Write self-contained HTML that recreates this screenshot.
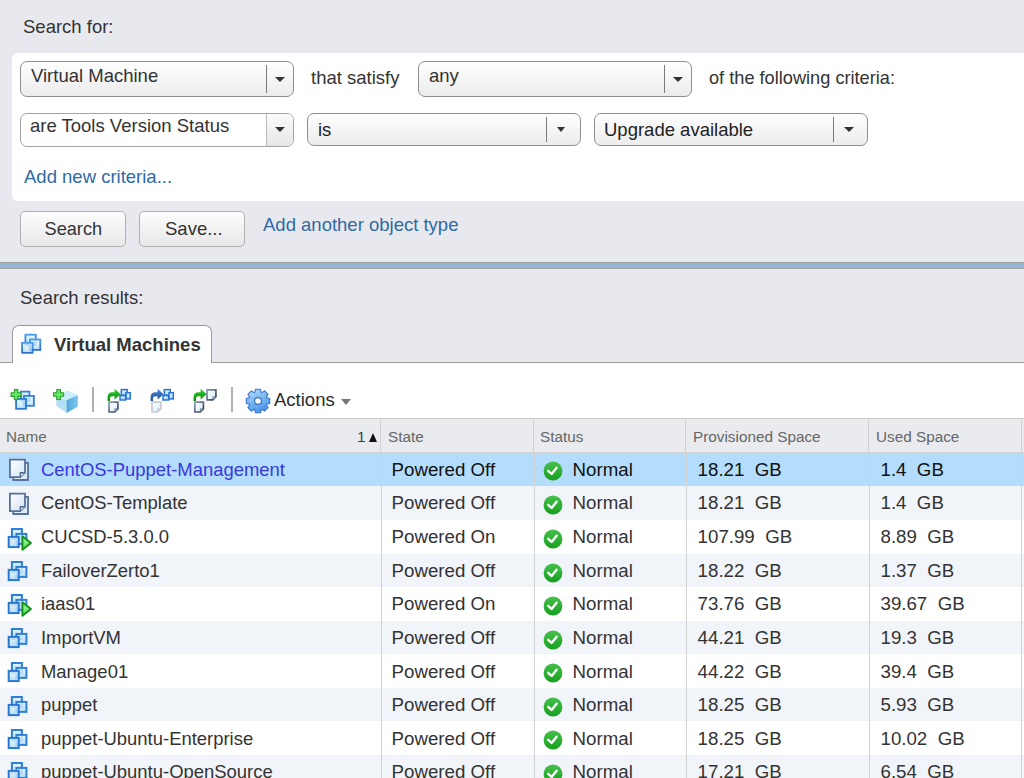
<!DOCTYPE html>
<html><head><meta charset="utf-8">
<style>
*{box-sizing:border-box;margin:0;padding:0}
html,body{width:1024px;height:778px;overflow:hidden}
body{background:#e8e9ee;font-family:"Liberation Sans",sans-serif;color:#333;font-size:18.5px;position:relative}
.a{position:absolute;white-space:pre}
.t{position:absolute;white-space:pre;line-height:20px}
.panel{position:absolute;left:12px;top:53px;width:1020px;height:148px;background:#fff;border-radius:6px}
.dd{position:absolute;border:1.5px solid #8e8e8e;border-radius:7px;background:linear-gradient(#fefefe,#ececec)}
.dd .div{position:absolute;top:3px;bottom:3px;width:1px;background:#7a7a7a}
.dd .arr{position:absolute;width:0;height:0;border-left:5px solid transparent;border-right:5px solid transparent;border-top:5px solid #333}
.btn{position:absolute;border:1px solid #b0b0b0;border-radius:5px;background:linear-gradient(#fdfdfd,#e8e8e8)}
.link{color:#2e6aa6}
.sep{position:absolute;left:0;top:262px;width:1024px;height:7px;background:#96b5d2;border-top:1.5px solid #a0a0a0;border-bottom:1.5px solid #a6a6a6}
.tab{position:absolute;left:12px;top:325px;width:200px;height:38px;background:#fff;border:1.5px solid #9a9a9a;border-bottom:none;border-radius:7px 7px 0 0}
.lower{position:absolute;left:0;top:362px;width:1024px;height:416px;background:#fff;border-top:1.5px solid #9a9a9a}
.hdr{position:absolute;left:0;top:418px;width:1024px;height:35px;background:#e9ebef;border-top:1.5px solid #cacaca;border-bottom:1px solid #d6d3d0;z-index:2}
.hdr2{z-index:3}
.hdr span{position:absolute;top:9px;font-size:15px;color:#666;line-height:18px}
.row{position:absolute;left:0;width:1024px;height:34px}
.row span{position:absolute;top:7px;line-height:20px}
.vl{position:absolute;width:1px;background:#d2d2d2}
.ic{position:absolute;overflow:visible}
.r{font-size:18.7px}
.h{position:absolute;top:427.5px;font-size:15.3px;color:#666;line-height:18px;white-space:pre}
.tsep{position:absolute;top:387px;width:1.5px;height:25px;background:#b0b0b0}
</style></head><body>
<div class="t" style="left:23px;top:17px">Search for:</div>
<div class="panel"></div>

<!-- row 1 -->
<div class="dd" style="left:20px;top:61px;width:274px;height:36px">
  <div class="div" style="left:245px"></div><div class="arr" style="left:254px;top:15px"></div>
</div>
<div class="t" style="left:31px;top:66px">Virtual Machine</div>
<div class="t" style="left:311px;top:68px">that satisfy</div>
<div class="dd" style="left:418px;top:61px;width:274px;height:36px">
  <div class="div" style="left:245px"></div><div class="arr" style="left:254px;top:15px"></div>
</div>
<div class="t" style="left:429px;top:66px">any</div>
<div class="t" style="left:709px;top:68px;font-size:18.2px">of the following criteria:</div>

<!-- row 2 -->
<div class="dd" style="left:20px;top:113px;width:274px;height:34px;background:#fff;border-color:#a4a4a4;overflow:hidden">
  <div style="position:absolute;left:245px;top:0;bottom:0;right:0;background:linear-gradient(#fbfbfb,#e6e6e6);border-left:1px solid #b9b9b9"></div><div class="arr" style="left:254px;top:13px"></div>
</div>
<div class="t" style="left:30px;top:116px">are Tools Version Status</div>
<div class="dd" style="left:307px;top:113px;width:274px;height:33px">
  <div class="div" style="left:238px"></div><div class="arr" style="left:249px;top:13px;border-left-width:4px;border-right-width:4px"></div>
</div>
<div class="t" style="left:318px;top:120px;color:#222">is</div>
<div class="dd" style="left:594px;top:113px;width:274px;height:33px">
  <div class="div" style="left:238px"></div><div class="arr" style="left:249px;top:13px;border-left-width:5px;border-right-width:5px"></div>
</div>
<div class="t" style="left:604px;top:120px;color:#222">Upgrade available</div>

<div class="t link" style="left:24px;top:167px">Add new criteria...</div>

<div class="btn" style="left:20px;top:211px;width:106px;height:36px"></div>
<div class="t" style="left:44.5px;top:219px;color:#333;font-size:18.2px">Search</div>
<div class="btn" style="left:139px;top:211px;width:106px;height:36px"></div>
<div class="t" style="left:165px;top:219px;color:#333">Save...</div>
<div class="t link" style="left:263px;top:215px">Add another object type</div>

<div class="sep"></div>

<div class="t" style="left:20px;top:288px">Search results:</div>
<div class="lower"></div>
<div class="tab"></div>
<svg class="ic" style="left:21px;top:333px" width="22" height="22" viewBox="0 0 22 22">
<defs><linearGradient id="tabg" x1="0" y1="0" x2="0" y2="1"><stop offset="0" stop-color="#e8f8ff"/><stop offset="1" stop-color="#b2dcf6"/></linearGradient>
<linearGradient id="tabs" x1="0" y1="0" x2="0" y2="1"><stop offset="0" stop-color="#4c9ae6"/><stop offset="1" stop-color="#2a72cc"/></linearGradient></defs>
<rect x="4.4" y="1.7" width="10.4" height="10" fill="url(#tabg)" stroke="url(#tabs)" stroke-width="1.8"/>
<rect x="8.9" y="6.5" width="10.4" height="10.4" fill="url(#tabg)" fill-opacity="0.8" stroke="url(#tabs)" stroke-width="1.8"/>
<rect x="1.1" y="9.8" width="10.5" height="10" fill="url(#tabg)" fill-opacity="0.75" stroke="url(#tabs)" stroke-width="1.8"/>
</svg>
<div class="t" style="left:54px;top:335px;font-weight:bold">Virtual Machines</div>


<!-- toolbar -->
<svg class="ic" style="left:10px;top:389px" width="28" height="24" viewBox="0 0 28 24">
<defs><linearGradient id="tvg" x1="0" y1="0" x2="0" y2="1"><stop offset="0" stop-color="#e6f7fe"/><stop offset="1" stop-color="#aedbf6"/></linearGradient></defs>
<rect x="10.8" y="2.6" width="8.6" height="9" fill="url(#tvg)" stroke="#3481da" stroke-width="1.8"/>
<rect x="14" y="6.9" width="9.9" height="9.9" fill="url(#tvg)" fill-opacity="0.8" stroke="#3481da" stroke-width="1.8"/>
<rect x="6.1" y="9.9" width="9.9" height="9.9" fill="url(#tvg)" fill-opacity="0.75" stroke="#2b78d2" stroke-width="1.8"/>
<path d="M4.3 0.5999999999999996 H7.8999999999999995 V3.8 H11.1 V7.3999999999999995 H7.8999999999999995 V10.6 H4.3 V7.3999999999999995 H1.0999999999999996 V3.8 H4.3 Z" fill="#62ea62" stroke="#2f9a2f" stroke-width="1.1" stroke-linejoin="round"/>
</svg>
<svg class="ic" style="left:52px;top:389px" width="28" height="26" viewBox="0 0 28 26">
<defs><linearGradient id="cbl" x1="0" y1="0" x2="0" y2="1"><stop offset="0" stop-color="#a9dbf3"/><stop offset="1" stop-color="#bfe6f8"/></linearGradient>
<linearGradient id="cbr" x1="0" y1="0" x2="1" y2="0"><stop offset="0" stop-color="#4fa6dc"/><stop offset="1" stop-color="#7ccaf0"/></linearGradient></defs>
<path d="M4.3 8.2 L14.9 1.6 L25.9 6 L14.5 11.2 Z" fill="#c8ecf9"/>
<path d="M4.3 8.2 L14.5 11.2 L14.5 23.9 L4.3 17 Z" fill="url(#cbl)"/>
<path d="M14.5 11.2 L25.9 6 L25.7 17.8 L14.5 23.9 Z" fill="url(#cbr)"/>
<path d="M4.8 0.5 H8.4 V3.7 H11.6 V7.3 H8.4 V10.5 H4.8 V7.3 H1.5999999999999996 V3.7 H4.8 Z" fill="#62ea62" stroke="#2f9a2f" stroke-width="1.1" stroke-linejoin="round"/>
</svg>
<div class="tsep" style="left:92px"></div>
<svg class="ic" style="left:100px;top:384px" width="34" height="32" viewBox="0 0 34 32"><defs>
<linearGradient id="garr" x1="0" y1="0" x2="0" y2="1"><stop offset="0" stop-color="#2ed02e"/><stop offset="1" stop-color="#0b8a0b"/></linearGradient>
<linearGradient id="barr" x1="0" y1="0" x2="0" y2="1"><stop offset="0" stop-color="#4a86d8"/><stop offset="1" stop-color="#1c4a94"/></linearGradient>
<linearGradient id="pgs" x1="0" y1="0" x2="1" y2="1"><stop offset="0" stop-color="#8d9bb2"/><stop offset="1" stop-color="#2c3b56"/></linearGradient>
<linearGradient id="pgf" x1="0" y1="0" x2="1" y2="1"><stop offset="0" stop-color="#ffffff"/><stop offset="1" stop-color="#d8ecfa"/></linearGradient>
<linearGradient id="sqf" x1="0" y1="0" x2="0" y2="1"><stop offset="0" stop-color="#e2f6fe"/><stop offset="1" stop-color="#9fdaf6"/></linearGradient>
</defs><path d="M7.6 17 L7.6 13 Q7.6 8.3 12.6 8.3 L14.6 8.3 L14.6 4.8 L20.6 10.2 L14.6 15.6 L14.6 12.3 L12.8 12.3 Q10 12.3 10 14.6 L10 17 Z" fill="url(#garr)"/><rect x="21.3" y="5.6" width="6" height="5.6" fill="url(#sqf)" stroke="#2b74d4" stroke-width="1.5"/>
<rect x="26" y="8.7" width="4.3" height="6.2" fill="url(#sqf)" stroke="#2b74d4" stroke-width="1.5"/>
<rect x="20" y="11.6" width="5.6" height="4.4" fill="url(#sqf)" stroke="#2b74d4" stroke-width="1.5"/><path d="M9 18.1 H17.9 V24.8 L14.7 28 H9 Z" fill="url(#pgf)" stroke="url(#pgs)" stroke-width="1.7" stroke-linejoin="miter"/><path d="M15.0 27.6 V25.0 H17.599999999999998" fill="#dfeaf5" stroke="url(#pgs)" stroke-width="1.3"/></svg>
<svg class="ic" style="left:143px;top:384px" width="34" height="32" viewBox="0 0 34 32"><path d="M7.6 17 L7.6 13 Q7.6 8.3 12.6 8.3 L14.6 8.3 L14.6 4.8 L20.6 10.2 L14.6 15.6 L14.6 12.3 L12.8 12.3 Q10 12.3 10 14.6 L10 17 Z" fill="url(#barr)"/><rect x="21.3" y="5.6" width="6" height="5.6" fill="url(#sqf)" stroke="#2b74d4" stroke-width="1.5"/>
<rect x="26" y="8.7" width="4.3" height="6.2" fill="url(#sqf)" stroke="#2b74d4" stroke-width="1.5"/>
<rect x="20" y="11.6" width="5.6" height="4.4" fill="url(#sqf)" stroke="#2b74d4" stroke-width="1.5"/><path d="M9 18.1 H17.9 V24.8 L14.7 28 H9 Z" fill="url(#pgf)" stroke="#c5ccd6" stroke-width="1.7" stroke-linejoin="miter"/><path d="M15.0 27.6 V25.0 H17.599999999999998" fill="#dfeaf5" stroke="#c5ccd6" stroke-width="1.3"/></svg>
<svg class="ic" style="left:186px;top:384px" width="34" height="32" viewBox="0 0 34 32"><path d="M7.6 17 L7.6 13 Q7.6 8.3 12.6 8.3 L14.6 8.3 L14.6 4.8 L20.6 10.2 L14.6 15.6 L14.6 12.3 L12.8 12.3 Q10 12.3 10 14.6 L10 17 Z" fill="url(#garr)"/><path d="M21 5.9 H29.9 V12.7 L26.7 15.9 H21 Z" fill="url(#pgf)" stroke="url(#pgs)" stroke-width="1.7" stroke-linejoin="miter"/><path d="M27.0 15.5 V12.899999999999999 H29.599999999999998" fill="#dfeaf5" stroke="url(#pgs)" stroke-width="1.3"/><path d="M8.8 18.1 H17.4 V24.8 L14.2 28 H8.8 Z" fill="url(#pgf)" stroke="url(#pgs)" stroke-width="1.7" stroke-linejoin="miter"/><path d="M14.5 27.6 V25.0 H17.099999999999998" fill="#dfeaf5" stroke="url(#pgs)" stroke-width="1.3"/></svg>
<div class="tsep" style="left:231px"></div>
<svg class="ic" style="left:245px;top:388px" width="26" height="26" viewBox="0 0 26 26">
<defs><linearGradient id="gear" x1="0" y1="0" x2="0.4" y2="1"><stop offset="0" stop-color="#b6dcfa"/><stop offset="1" stop-color="#4d98e8"/></linearGradient></defs>
<path fill="url(#gear)" stroke="#3173c8" stroke-width="1.1" stroke-linejoin="round" d="M9.90 4.23 L10.50 1.26 L15.50 1.26 L16.10 4.23 L17.01 4.61 L19.53 2.93 L23.07 6.47 L21.39 8.99 L21.77 9.90 L24.74 10.50 L24.74 15.50 L21.77 16.10 L21.39 17.01 L23.07 19.53 L19.53 23.07 L17.01 21.39 L16.10 21.77 L15.50 24.74 L10.50 24.74 L9.90 21.77 L8.99 21.39 L6.47 23.07 L2.93 19.53 L4.61 17.01 L4.23 16.10 L1.26 15.50 L1.26 10.50 L4.23 9.90 L4.61 8.99 L2.93 6.47 L6.47 2.93 L8.99 4.61 Z"/>
<circle cx="13" cy="13" r="3.4" fill="#fff" stroke="#2f6fc6" stroke-width="1.2"/>
</svg>
<div class="t" style="left:274px;top:389.7px;color:#2a2a2a">Actions</div>
<div class="a" style="left:340.5px;top:398.5px;width:0;height:0;border-left:5px solid transparent;border-right:5px solid transparent;border-top:6px solid #777"></div>

<div class="hdr"></div>
<div class="vl hdr2" style="left:380px;top:419px;height:33px;background:#d0d0d0"></div>
<div class="vl hdr2" style="left:533px;top:419px;height:33px;background:#d0d0d0"></div>
<div class="vl hdr2" style="left:685px;top:419px;height:33px;background:#d0d0d0"></div>
<div class="vl hdr2" style="left:868px;top:419px;height:33px;background:#d0d0d0"></div>
<div class="vl hdr2" style="left:1021px;top:419px;height:33px;background:#d0d0d0"></div>
<div class="h hdr2" style="left:6px">Name</div>
<div class="h hdr2" style="left:357px;color:#1d4a5a">1</div>
<div class="a hdr2" style="left:369px;top:433px;width:0;height:0;border-left:4.5px solid transparent;border-right:4.5px solid transparent;border-bottom:9px solid #111"></div>
<div class="h hdr2" style="left:388px">State</div>
<div class="h hdr2" style="left:540px">Status</div>
<div class="h hdr2" style="left:693px">Provisioned Space</div>
<div class="h hdr2" style="left:876px">Used Space</div>
<div class="row" style="top:452px;height:34.0px;background:#b4ddfb"></div>
<svg class="ic" style="left:8px;top:458px" width="24" height="24" viewBox="0 0 24 24">
<defs><linearGradient id="tg0" x1="0" y1="0" x2="1" y2="1"><stop offset="0" stop-color="#ffffff"/><stop offset="1" stop-color="#d3e4f6"/></linearGradient></defs>
<path d="M5.3 4.9 H20 V22 H5.3 Z" fill="url(#tg0)" stroke="#56729a" stroke-width="1.8"/>
<path d="M1.9 1.7 H17 V14.7 L12.2 19.1 H1.9 Z" fill="url(#tg0)" stroke="#56729a" stroke-width="1.8" stroke-linejoin="miter"/>
<path d="M12.4 18.9 V14.9 H16.8" fill="#eef4fb" stroke="#56729a" stroke-width="1.6"/>
</svg>
<div class="t r" style="left:41px;top:460.1px;color:#3838e0;font-size:18.45px">CentOS-Puppet-Management</div>
<div class="t r" style="left:391.6px;top:460.1px;color:#111">Powered Off</div>
<svg class="ic" style="left:542.5px;top:461px" width="20" height="20" viewBox="0 0 20 20">
<defs><linearGradient id="cg0" x1="0" y1="0" x2="0" y2="1"><stop offset="0" stop-color="#46c04c"/><stop offset="1" stop-color="#16a01e"/></linearGradient></defs>
<circle cx="10" cy="10" r="9.4" fill="url(#cg0)"/>
<path d="M5.2 9.8 L8.6 12.9 L13.6 6.8" fill="none" stroke="#fff" stroke-width="2.4" stroke-linecap="round" stroke-linejoin="round"/>
</svg>
<div class="t r" style="left:572.6px;top:460.1px;color:#111">Normal</div>
<div class="t r" style="left:697.6px;top:460.1px;color:#111">18.21  GB</div>
<div class="t r" style="left:880.5px;top:460.1px;color:#111">1.4  GB</div>
<div class="row" style="top:486px;height:34.0px;background:#f1f4f9"></div>
<svg class="ic" style="left:8px;top:492px" width="24" height="24" viewBox="0 0 24 24">
<defs><linearGradient id="tg1" x1="0" y1="0" x2="1" y2="1"><stop offset="0" stop-color="#ffffff"/><stop offset="1" stop-color="#d3e4f6"/></linearGradient></defs>
<path d="M5.3 4.9 H20 V22 H5.3 Z" fill="url(#tg1)" stroke="#56729a" stroke-width="1.8"/>
<path d="M1.9 1.7 H17 V14.7 L12.2 19.1 H1.9 Z" fill="url(#tg1)" stroke="#56729a" stroke-width="1.8" stroke-linejoin="miter"/>
<path d="M12.4 18.9 V14.9 H16.8" fill="#eef4fb" stroke="#56729a" stroke-width="1.6"/>
</svg>
<div class="t r" style="left:41px;top:493.3px;color:#333;font-size:18.45px">CentOS-Template</div>
<div class="t r" style="left:391.6px;top:493.3px;color:#333">Powered Off</div>
<svg class="ic" style="left:542.5px;top:495px" width="20" height="20" viewBox="0 0 20 20">
<defs><linearGradient id="cg1" x1="0" y1="0" x2="0" y2="1"><stop offset="0" stop-color="#46c04c"/><stop offset="1" stop-color="#16a01e"/></linearGradient></defs>
<circle cx="10" cy="10" r="9.4" fill="url(#cg1)"/>
<path d="M5.2 9.8 L8.6 12.9 L13.6 6.8" fill="none" stroke="#fff" stroke-width="2.4" stroke-linecap="round" stroke-linejoin="round"/>
</svg>
<div class="t r" style="left:572.6px;top:493.3px;color:#333">Normal</div>
<div class="t r" style="left:697.6px;top:493.3px;color:#333">18.21  GB</div>
<div class="t r" style="left:880.5px;top:493.3px;color:#333">1.4  GB</div>
<div class="row" style="top:520px;height:33.5px;background:#ffffff"></div>
<svg class="ic" style="left:7px;top:528px" width="28" height="26" viewBox="0 0 28 26">
<defs><linearGradient id="vg2" x1="0" y1="0" x2="0" y2="1"><stop offset="0" stop-color="#e4f6fe"/><stop offset="1" stop-color="#aad9f5"/></linearGradient>
<linearGradient id="pg2" x1="0" y1="0" x2="0" y2="1"><stop offset="0" stop-color="#aef5ae"/><stop offset="1" stop-color="#4fe04f"/></linearGradient></defs>
<rect x="4.9" y="1" width="10" height="10" fill="url(#vg2)" stroke="#2f7fd8" stroke-width="2"/>
<rect x="9.4" y="5.9" width="10" height="10" fill="url(#vg2)" fill-opacity="0.85" stroke="#2f7fd8" stroke-width="2"/>
<rect x="1.7" y="8.9" width="10" height="10.2" fill="url(#vg2)" fill-opacity="0.85" stroke="#2b78d2" stroke-width="2"/>
<path d="M15.4 8.3 L15.4 21.8 L23.9 15 Z" fill="url(#pg2)" stroke="#17931b" stroke-width="2" stroke-linejoin="round"/>
</svg>
<div class="t r" style="left:41px;top:527.3px;color:#333;font-size:18.45px">CUCSD-5.3.0.0</div>
<div class="t r" style="left:391.6px;top:527.3px;color:#333">Powered On</div>
<svg class="ic" style="left:542.5px;top:529px" width="20" height="20" viewBox="0 0 20 20">
<defs><linearGradient id="cg2" x1="0" y1="0" x2="0" y2="1"><stop offset="0" stop-color="#46c04c"/><stop offset="1" stop-color="#16a01e"/></linearGradient></defs>
<circle cx="10" cy="10" r="9.4" fill="url(#cg2)"/>
<path d="M5.2 9.8 L8.6 12.9 L13.6 6.8" fill="none" stroke="#fff" stroke-width="2.4" stroke-linecap="round" stroke-linejoin="round"/>
</svg>
<div class="t r" style="left:572.6px;top:527.3px;color:#333">Normal</div>
<div class="t r" style="left:697.6px;top:527.3px;color:#333">107.99  GB</div>
<div class="t r" style="left:880.5px;top:527.3px;color:#333">8.89  GB</div>
<div class="row" style="top:553.5px;height:33.5px;background:#f1f4f9"></div>
<svg class="ic" style="left:7px;top:561px" width="22" height="22" viewBox="0 0 22 22">
<defs><linearGradient id="vg3" x1="0" y1="0" x2="0" y2="1"><stop offset="0" stop-color="#e4f6fe"/><stop offset="1" stop-color="#aad9f5"/></linearGradient></defs>
<rect x="4.9" y="1" width="10" height="10" fill="url(#vg3)" stroke="#2f7fd8" stroke-width="2"/>
<rect x="9.4" y="5.9" width="10" height="10" fill="url(#vg3)" fill-opacity="0.85" stroke="#2f7fd8" stroke-width="2"/>
<rect x="1.7" y="8.9" width="10" height="10.2" fill="url(#vg3)" fill-opacity="0.85" stroke="#2b78d2" stroke-width="2"/>
</svg>
<div class="t r" style="left:41px;top:560.8px;color:#333;font-size:18.45px">FailoverZerto1</div>
<div class="t r" style="left:391.6px;top:560.8px;color:#333">Powered Off</div>
<svg class="ic" style="left:542.5px;top:562.5px" width="20" height="20" viewBox="0 0 20 20">
<defs><linearGradient id="cg3" x1="0" y1="0" x2="0" y2="1"><stop offset="0" stop-color="#46c04c"/><stop offset="1" stop-color="#16a01e"/></linearGradient></defs>
<circle cx="10" cy="10" r="9.4" fill="url(#cg3)"/>
<path d="M5.2 9.8 L8.6 12.9 L13.6 6.8" fill="none" stroke="#fff" stroke-width="2.4" stroke-linecap="round" stroke-linejoin="round"/>
</svg>
<div class="t r" style="left:572.6px;top:560.8px;color:#333">Normal</div>
<div class="t r" style="left:697.6px;top:560.8px;color:#333">18.22  GB</div>
<div class="t r" style="left:880.5px;top:560.8px;color:#333">1.37  GB</div>
<div class="row" style="top:587px;height:33.6px;background:#ffffff"></div>
<svg class="ic" style="left:7px;top:594px" width="28" height="26" viewBox="0 0 28 26">
<defs><linearGradient id="vg4" x1="0" y1="0" x2="0" y2="1"><stop offset="0" stop-color="#e4f6fe"/><stop offset="1" stop-color="#aad9f5"/></linearGradient>
<linearGradient id="pg4" x1="0" y1="0" x2="0" y2="1"><stop offset="0" stop-color="#aef5ae"/><stop offset="1" stop-color="#4fe04f"/></linearGradient></defs>
<rect x="4.9" y="1" width="10" height="10" fill="url(#vg4)" stroke="#2f7fd8" stroke-width="2"/>
<rect x="9.4" y="5.9" width="10" height="10" fill="url(#vg4)" fill-opacity="0.85" stroke="#2f7fd8" stroke-width="2"/>
<rect x="1.7" y="8.9" width="10" height="10.2" fill="url(#vg4)" fill-opacity="0.85" stroke="#2b78d2" stroke-width="2"/>
<path d="M15.4 8.3 L15.4 21.8 L23.9 15 Z" fill="url(#pg4)" stroke="#17931b" stroke-width="2" stroke-linejoin="round"/>
</svg>
<div class="t r" style="left:41px;top:594.3px;color:#333;font-size:18.45px">iaas01</div>
<div class="t r" style="left:391.6px;top:594.3px;color:#333">Powered On</div>
<svg class="ic" style="left:542.5px;top:596px" width="20" height="20" viewBox="0 0 20 20">
<defs><linearGradient id="cg4" x1="0" y1="0" x2="0" y2="1"><stop offset="0" stop-color="#46c04c"/><stop offset="1" stop-color="#16a01e"/></linearGradient></defs>
<circle cx="10" cy="10" r="9.4" fill="url(#cg4)"/>
<path d="M5.2 9.8 L8.6 12.9 L13.6 6.8" fill="none" stroke="#fff" stroke-width="2.4" stroke-linecap="round" stroke-linejoin="round"/>
</svg>
<div class="t r" style="left:572.6px;top:594.3px;color:#333">Normal</div>
<div class="t r" style="left:697.6px;top:594.3px;color:#333">73.76  GB</div>
<div class="t r" style="left:880.5px;top:594.3px;color:#333">39.67  GB</div>
<div class="row" style="top:620.6px;height:33.7px;background:#f1f4f9"></div>
<svg class="ic" style="left:7px;top:628px" width="22" height="22" viewBox="0 0 22 22">
<defs><linearGradient id="vg5" x1="0" y1="0" x2="0" y2="1"><stop offset="0" stop-color="#e4f6fe"/><stop offset="1" stop-color="#aad9f5"/></linearGradient></defs>
<rect x="4.9" y="1" width="10" height="10" fill="url(#vg5)" stroke="#2f7fd8" stroke-width="2"/>
<rect x="9.4" y="5.9" width="10" height="10" fill="url(#vg5)" fill-opacity="0.85" stroke="#2f7fd8" stroke-width="2"/>
<rect x="1.7" y="8.9" width="10" height="10.2" fill="url(#vg5)" fill-opacity="0.85" stroke="#2b78d2" stroke-width="2"/>
</svg>
<div class="t r" style="left:41px;top:627.9px;color:#333;font-size:18.45px">ImportVM</div>
<div class="t r" style="left:391.6px;top:627.9px;color:#333">Powered Off</div>
<svg class="ic" style="left:542.5px;top:629.6px" width="20" height="20" viewBox="0 0 20 20">
<defs><linearGradient id="cg5" x1="0" y1="0" x2="0" y2="1"><stop offset="0" stop-color="#46c04c"/><stop offset="1" stop-color="#16a01e"/></linearGradient></defs>
<circle cx="10" cy="10" r="9.4" fill="url(#cg5)"/>
<path d="M5.2 9.8 L8.6 12.9 L13.6 6.8" fill="none" stroke="#fff" stroke-width="2.4" stroke-linecap="round" stroke-linejoin="round"/>
</svg>
<div class="t r" style="left:572.6px;top:627.9px;color:#333">Normal</div>
<div class="t r" style="left:697.6px;top:627.9px;color:#333">44.21  GB</div>
<div class="t r" style="left:880.5px;top:627.9px;color:#333">19.3  GB</div>
<div class="row" style="top:654.3px;height:33.7px;background:#ffffff"></div>
<svg class="ic" style="left:7px;top:662px" width="22" height="22" viewBox="0 0 22 22">
<defs><linearGradient id="vg6" x1="0" y1="0" x2="0" y2="1"><stop offset="0" stop-color="#e4f6fe"/><stop offset="1" stop-color="#aad9f5"/></linearGradient></defs>
<rect x="4.9" y="1" width="10" height="10" fill="url(#vg6)" stroke="#2f7fd8" stroke-width="2"/>
<rect x="9.4" y="5.9" width="10" height="10" fill="url(#vg6)" fill-opacity="0.85" stroke="#2f7fd8" stroke-width="2"/>
<rect x="1.7" y="8.9" width="10" height="10.2" fill="url(#vg6)" fill-opacity="0.85" stroke="#2b78d2" stroke-width="2"/>
</svg>
<div class="t r" style="left:41px;top:661.5999999999999px;color:#333;font-size:18.45px">Manage01</div>
<div class="t r" style="left:391.6px;top:661.5999999999999px;color:#333">Powered Off</div>
<svg class="ic" style="left:542.5px;top:663.3px" width="20" height="20" viewBox="0 0 20 20">
<defs><linearGradient id="cg6" x1="0" y1="0" x2="0" y2="1"><stop offset="0" stop-color="#46c04c"/><stop offset="1" stop-color="#16a01e"/></linearGradient></defs>
<circle cx="10" cy="10" r="9.4" fill="url(#cg6)"/>
<path d="M5.2 9.8 L8.6 12.9 L13.6 6.8" fill="none" stroke="#fff" stroke-width="2.4" stroke-linecap="round" stroke-linejoin="round"/>
</svg>
<div class="t r" style="left:572.6px;top:661.5999999999999px;color:#333">Normal</div>
<div class="t r" style="left:697.6px;top:661.5999999999999px;color:#333">44.22  GB</div>
<div class="t r" style="left:880.5px;top:661.5999999999999px;color:#333">39.4  GB</div>
<div class="row" style="top:688px;height:33.4px;background:#f1f4f9"></div>
<svg class="ic" style="left:7px;top:696px" width="22" height="22" viewBox="0 0 22 22">
<defs><linearGradient id="vg7" x1="0" y1="0" x2="0" y2="1"><stop offset="0" stop-color="#e4f6fe"/><stop offset="1" stop-color="#aad9f5"/></linearGradient></defs>
<rect x="4.9" y="1" width="10" height="10" fill="url(#vg7)" stroke="#2f7fd8" stroke-width="2"/>
<rect x="9.4" y="5.9" width="10" height="10" fill="url(#vg7)" fill-opacity="0.85" stroke="#2f7fd8" stroke-width="2"/>
<rect x="1.7" y="8.9" width="10" height="10.2" fill="url(#vg7)" fill-opacity="0.85" stroke="#2b78d2" stroke-width="2"/>
</svg>
<div class="t r" style="left:41px;top:695.3px;color:#333;font-size:18.45px">puppet</div>
<div class="t r" style="left:391.6px;top:695.3px;color:#333">Powered Off</div>
<svg class="ic" style="left:542.5px;top:697px" width="20" height="20" viewBox="0 0 20 20">
<defs><linearGradient id="cg7" x1="0" y1="0" x2="0" y2="1"><stop offset="0" stop-color="#46c04c"/><stop offset="1" stop-color="#16a01e"/></linearGradient></defs>
<circle cx="10" cy="10" r="9.4" fill="url(#cg7)"/>
<path d="M5.2 9.8 L8.6 12.9 L13.6 6.8" fill="none" stroke="#fff" stroke-width="2.4" stroke-linecap="round" stroke-linejoin="round"/>
</svg>
<div class="t r" style="left:572.6px;top:695.3px;color:#333">Normal</div>
<div class="t r" style="left:697.6px;top:695.3px;color:#333">18.25  GB</div>
<div class="t r" style="left:880.5px;top:695.3px;color:#333">5.93  GB</div>
<div class="row" style="top:721.4px;height:33.6px;background:#ffffff"></div>
<svg class="ic" style="left:7px;top:729px" width="22" height="22" viewBox="0 0 22 22">
<defs><linearGradient id="vg8" x1="0" y1="0" x2="0" y2="1"><stop offset="0" stop-color="#e4f6fe"/><stop offset="1" stop-color="#aad9f5"/></linearGradient></defs>
<rect x="4.9" y="1" width="10" height="10" fill="url(#vg8)" stroke="#2f7fd8" stroke-width="2"/>
<rect x="9.4" y="5.9" width="10" height="10" fill="url(#vg8)" fill-opacity="0.85" stroke="#2f7fd8" stroke-width="2"/>
<rect x="1.7" y="8.9" width="10" height="10.2" fill="url(#vg8)" fill-opacity="0.85" stroke="#2b78d2" stroke-width="2"/>
</svg>
<div class="t r" style="left:41px;top:728.6999999999999px;color:#333;font-size:18.45px">puppet-Ubuntu-Enterprise</div>
<div class="t r" style="left:391.6px;top:728.6999999999999px;color:#333">Powered Off</div>
<svg class="ic" style="left:542.5px;top:730.4px" width="20" height="20" viewBox="0 0 20 20">
<defs><linearGradient id="cg8" x1="0" y1="0" x2="0" y2="1"><stop offset="0" stop-color="#46c04c"/><stop offset="1" stop-color="#16a01e"/></linearGradient></defs>
<circle cx="10" cy="10" r="9.4" fill="url(#cg8)"/>
<path d="M5.2 9.8 L8.6 12.9 L13.6 6.8" fill="none" stroke="#fff" stroke-width="2.4" stroke-linecap="round" stroke-linejoin="round"/>
</svg>
<div class="t r" style="left:572.6px;top:728.6999999999999px;color:#333">Normal</div>
<div class="t r" style="left:697.6px;top:728.6999999999999px;color:#333">18.25  GB</div>
<div class="t r" style="left:880.5px;top:728.6999999999999px;color:#333">10.02  GB</div>
<div class="row" style="top:755px;height:33.7px;background:#f1f4f9"></div>
<svg class="ic" style="left:7px;top:762px" width="22" height="22" viewBox="0 0 22 22">
<defs><linearGradient id="vg9" x1="0" y1="0" x2="0" y2="1"><stop offset="0" stop-color="#e4f6fe"/><stop offset="1" stop-color="#aad9f5"/></linearGradient></defs>
<rect x="4.9" y="1" width="10" height="10" fill="url(#vg9)" stroke="#2f7fd8" stroke-width="2"/>
<rect x="9.4" y="5.9" width="10" height="10" fill="url(#vg9)" fill-opacity="0.85" stroke="#2f7fd8" stroke-width="2"/>
<rect x="1.7" y="8.9" width="10" height="10.2" fill="url(#vg9)" fill-opacity="0.85" stroke="#2b78d2" stroke-width="2"/>
</svg>
<div class="t r" style="left:41px;top:762.3px;color:#333;font-size:18.45px">puppet-Ubuntu-OpenSource</div>
<div class="t r" style="left:391.6px;top:762.3px;color:#333">Powered Off</div>
<svg class="ic" style="left:542.5px;top:764px" width="20" height="20" viewBox="0 0 20 20">
<defs><linearGradient id="cg9" x1="0" y1="0" x2="0" y2="1"><stop offset="0" stop-color="#46c04c"/><stop offset="1" stop-color="#16a01e"/></linearGradient></defs>
<circle cx="10" cy="10" r="9.4" fill="url(#cg9)"/>
<path d="M5.2 9.8 L8.6 12.9 L13.6 6.8" fill="none" stroke="#fff" stroke-width="2.4" stroke-linecap="round" stroke-linejoin="round"/>
</svg>
<div class="t r" style="left:572.6px;top:762.3px;color:#333">Normal</div>
<div class="t r" style="left:697.6px;top:762.3px;color:#333">17.21  GB</div>
<div class="t r" style="left:880.5px;top:762.3px;color:#333">6.54  GB</div>
<div class="vl" style="left:381px;top:452px;height:330px"></div>
<div class="vl" style="left:534px;top:452px;height:330px"></div>
<div class="vl" style="left:686px;top:452px;height:330px"></div>
<div class="vl" style="left:869px;top:452px;height:330px"></div>
<div class="vl" style="left:1021px;top:452px;height:330px"></div>

</body></html>
